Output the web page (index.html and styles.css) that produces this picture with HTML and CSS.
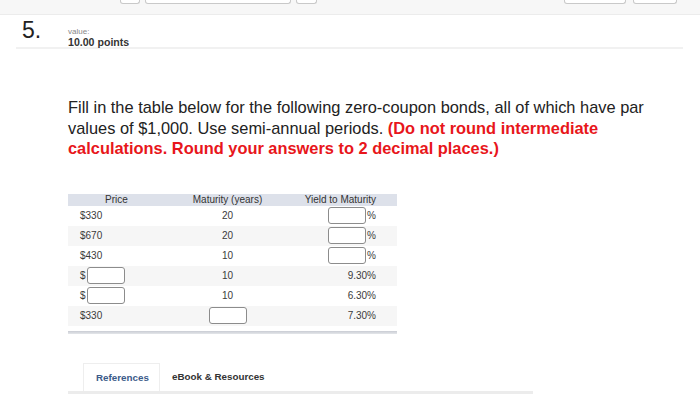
FILE: index.html
```html
<!DOCTYPE html>
<html>
<head>
<meta charset="utf-8">
<link rel="stylesheet" href="styles.css">
</head>
<body>
<div class="topbar">
  <span class="tb-btn w18"></span>
  <span class="tb-btn w145"></span>
  <span class="tb-btn w19"></span>
  <span class="tb-spacer"></span>
  <span class="tb-btn w60"></span>
  <span class="tb-btn w42"></span>
</div>
<div class="qhead">
  <div class="num">5.</div>
  <div class="meta">
    <div class="meta-label">value:</div>
    <div class="meta-points">10.00 points</div>
  </div>
</div>
<p class="question">Fill in the table below for the following zero-coupon bonds, all of which have par values of $1,000. Use semi-annual periods. <strong class="warn">(Do not round intermediate calculations. Round your answers to 2 decimal places.)</strong></p>
<table class="bonds">
  <colgroup>
    <col class="col-price">
    <col class="col-mat">
    <col class="col-yield">
  </colgroup>
  <thead>
    <tr><th class="c-price">Price</th><th class="c-mat">Maturity (years)</th><th class="c-yield">Yield to Maturity</th></tr>
  </thead>
  <tbody>
    <tr><td class="c-price">$330</td><td class="c-mat">20</td><td class="c-yield"><span class="box"></span>%</td></tr>
    <tr><td class="c-price">$670</td><td class="c-mat">20</td><td class="c-yield"><span class="box"></span>%</td></tr>
    <tr><td class="c-price">$430</td><td class="c-mat">10</td><td class="c-yield"><span class="box"></span>%</td></tr>
    <tr><td class="c-price">$<span class="box"></span></td><td class="c-mat">10</td><td class="c-yield">9.30%</td></tr>
    <tr><td class="c-price">$<span class="box"></span></td><td class="c-mat">10</td><td class="c-yield">6.30%</td></tr>
    <tr><td class="c-price">$330</td><td class="c-mat"><span class="box"></span></td><td class="c-yield">7.30%</td></tr>
  </tbody>
</table>
<div class="table-foot"></div>
<div class="tabs">
  <div class="tab active">References</div>
  <div class="tab">eBook &amp; Resources</div>
</div>
<div class="tab-panel"></div>
</body>
</html>
```
FILE: styles.css
```css
html, body {
  margin: 0;
  padding: 0;
  background: #fff;
}
body {
  width: 700px;
  height: 394px;
  overflow: hidden;
  font-family: "Liberation Sans", Arial, sans-serif;
  color: #222;
}
.topbar {
  height: 15px;
  box-sizing: border-box;
  background: #f7f7f7;
  border-bottom: 1px solid #ececec;
  display: flex;
  align-items: flex-start;
  padding: 0 23px 0 120px;
  gap: 5px;
}
.tb-btn {
  display: block;
  height: 3px;
  background: #fff;
  border: 1px solid #c9c9c9;
  border-top: none;
  border-radius: 0 0 3px 3px;
}
.w18 { width: 18px; }
.w145 { width: 144px; }
.w19 { width: 19px; }
.w60 { width: 60px; }
.w42 { width: 42px; margin-left: 2px; }
.tb-spacer { flex: 1; }

.qhead {
  display: flex;
  margin: 0 17px 0 16px;
  padding-left: 6px;
  height: 32px;
  border-bottom: 2px solid #f1f1f1;
}
.num {
  width: 46px;
  font-size: 23px;
  line-height: 23px;
  padding-top: 4px;
  color: #222;
}
.meta {
  padding-top: 12px;
}
.meta-label {
  font-size: 8px;
  line-height: 9px;
  color: #888;
}
.meta-points {
  font-size: 10.6px;
  line-height: 12px;
  font-weight: bold;
  color: #333;
}
.question {
  margin: 48px 0 0 68px;
  width: 610px;
  font-size: 16.4px;
  line-height: 20.5px;
  color: #222;
}
.warn {
  color: #e8161b;
}
.bonds {
  margin: 35px 0 0 68px;
  width: 329px;
  table-layout: fixed;
  border-collapse: collapse;
  font-size: 10px;
  color: #3a3a3a;
}
.col-price { width: 97px; }
.col-mat { width: 125px; }
.col-yield { width: 107px; }
.bonds th {
  background: #dde1ea;
  font-weight: normal;
  height: 12px;
  line-height: 12px;
  padding: 0;
  color: #333;
}
.bonds td {
  height: 20px;
  padding: 0;
  line-height: 20px;
  vertical-align: middle;
}
.bonds tbody tr:nth-child(even) td {
  background: #f6f6f6;
}
.c-mat { text-align: center; }
.c-yield { text-align: right; padding-right: 21px !important; }
th.c-price { text-align: center; }
td.c-price { padding-left: 12px !important; }
.box {
  display: inline-block;
  width: 36px;
  height: 15px;
  border: 1px solid #8c8c8c;
  border-radius: 3px;
  background: #fff;
  vertical-align: middle;
  margin: 0 1px;
}
.table-foot {
  margin: 5px 0 0 68px;
  width: 329px;
  height: 3px;
  background: linear-gradient(#c9ccd3, #e4e6ea);
}
.tabs {
  display: flex;
  margin: 29px 0 0 83px;
  height: 28px;
}
.tab {
  font-size: 9.8px;
  font-weight: bold;
  color: #333;
  padding: 8px 12px 0;
  line-height: 12px;
}
.tab.active {
  width: 77px;
  box-sizing: border-box;
  border: 1px solid #eeeeee;
  border-bottom: none;
  color: #3b5b8a;
}
.tab-panel {
  margin-left: 68px;
  width: 465px;
  height: 5px;
  background: #ececec;
}
```
